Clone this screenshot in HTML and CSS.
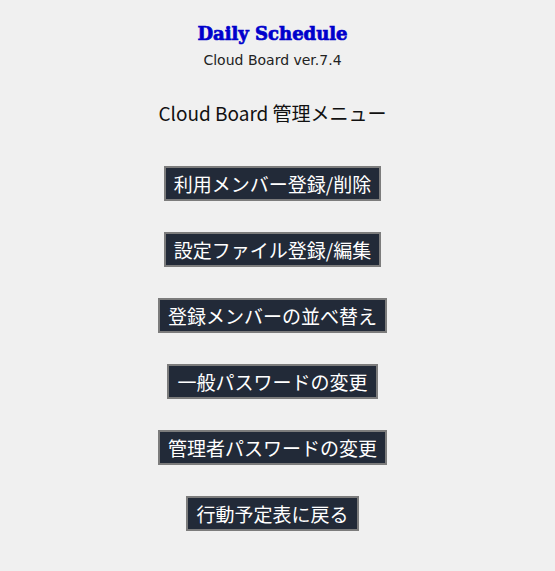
FILE: index.html
```html
<!DOCTYPE html>
<html lang="ja">
<head>
<meta charset="utf-8">
<title>Cloud Board</title>
<link rel="stylesheet" href="styles.css">
</head>
<body>
<div class="page">
  <h1 class="title">Daily Schedule</h1>
  <p class="version">Cloud Board ver.7.4</p>
  <h2 class="menu-title">Cloud Board 管理メニュー</h2>
  <div class="menu">
    <button class="btn" type="button">利用メンバー登録/削除</button>
    <button class="btn" type="button">設定ファイル登録/編集</button>
    <button class="btn" type="button">登録メンバーの並べ替え</button>
    <button class="btn" type="button">一般パスワードの変更</button>
    <button class="btn" type="button">管理者パスワードの変更</button>
    <button class="btn" type="button">行動予定表に戻る</button>
  </div>
</div>
</body>
</html>
```

FILE: styles.css
```css
html, body {
  margin: 0;
  padding: 0;
  background: #f0f0f0;
}
.page {
  display: flex;
  flex-direction: column;
  align-items: center;
  padding: 23px 10px 0 0;
}
.title {
  margin: 0;
  font-family: "DejaVu Serif", "Liberation Serif", serif;
  font-weight: 900;
  font-size: 18px;
  line-height: 22px;
  color: #0000cc;
  -webkit-text-stroke: 0.7px #0000cc;
}
.version {
  margin: 7px 0 0;
  font-family: "DejaVu Sans", Verdana, sans-serif;
  font-size: 14px;
  line-height: 17px;
  color: #222;
}
.menu-title {
  margin: 31px 0 0;
  font-family: "Noto Sans CJK JP", "DejaVu Sans", sans-serif;
  font-weight: normal;
  font-size: 19px;
  line-height: 26px;
  color: #111;
}
.menu {
  margin-top: 40px;
  display: flex;
  flex-direction: column;
  align-items: center;
  gap: 31px;
}
.btn {
  margin: 0;
  height: 35px;
  padding: 0 8px;
  border: 2px solid #7c7c7c;
  background: #222a38;
  color: #ffffff;
  font-family: "Noto Sans CJK JP", sans-serif;
  font-size: 19px;
  line-height: 29px;
}
```
